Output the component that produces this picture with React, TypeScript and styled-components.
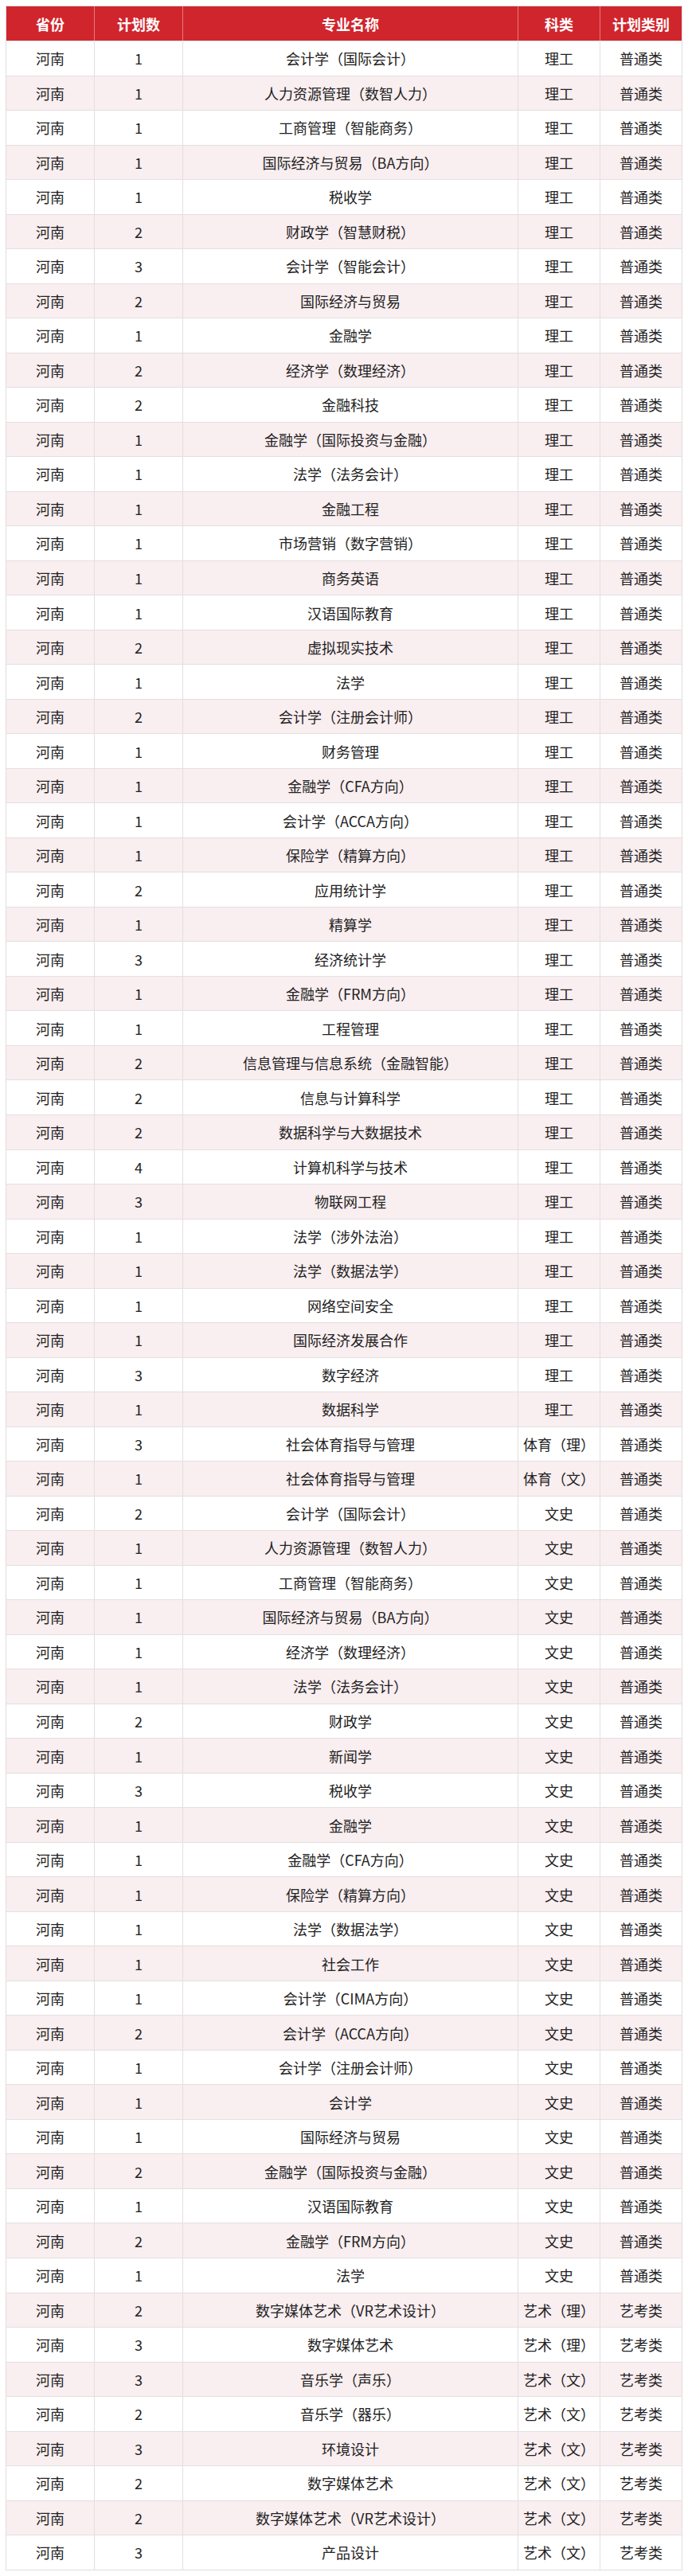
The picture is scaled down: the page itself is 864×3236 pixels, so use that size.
import styled, { createGlobalStyle } from 'styled-components'

const GlobalStyle = createGlobalStyle`
  html, body {
    margin: 0;
    padding: 0;
    background: #ffffff;
  }
  body {
    font-family: "Noto Sans CJK SC", "Noto Sans", sans-serif;
    color: #222222;
  }
`

const Page = styled.div`
  padding: 7px 7px 8px 7px;
`

const Table = styled.div`
  width: 850px;
  border: 1px solid #e2dcdd;
  box-sizing: border-box;
`

const COLUMNS = '111px 111px 421px 103px 102px'

const HeaderRow = styled.div`
  display: grid;
  grid-template-columns: ${COLUMNS};
  height: 43px;
  background: #d1252d;
`

const HeaderCell = styled.div`
  display: flex;
  align-items: center;
  justify-content: center;
  color: #ffffff;
  font-size: 18px;
  font-weight: 700;
  border-right: 1px solid #e27a7e;
  &:last-child {
    border-right: none;
  }
`

interface RowProps {
  striped: boolean
}

const Row = styled.div<RowProps>`
  display: grid;
  grid-template-columns: ${COLUMNS};
  height: 43.53px;
  box-sizing: border-box;
  border-top: 1.5px solid #e4dfe0;
  background: ${({ striped }) => (striped ? '#f9eef0' : '#ffffff')};
`

const Cell = styled.div`
  display: flex;
  align-items: center;
  justify-content: center;
  font-size: 18px;
  color: #222222;
  white-space: nowrap;
  border-right: 1px solid #e4dfe0;
  &:last-child {
    border-right: none;
  }
`

type Item = [number, string, string, string]

const LG = '理工'
const WS = '文史'
const PT = '普通类'
const YK = '艺考类'

const rows: Item[] = [
  [1, '会计学（国际会计）', LG, PT],
  [1, '人力资源管理（数智人力）', LG, PT],
  [1, '工商管理（智能商务）', LG, PT],
  [1, '国际经济与贸易（BA方向）', LG, PT],
  [1, '税收学', LG, PT],
  [2, '财政学（智慧财税）', LG, PT],
  [3, '会计学（智能会计）', LG, PT],
  [2, '国际经济与贸易', LG, PT],
  [1, '金融学', LG, PT],
  [2, '经济学（数理经济）', LG, PT],
  [2, '金融科技', LG, PT],
  [1, '金融学（国际投资与金融）', LG, PT],
  [1, '法学（法务会计）', LG, PT],
  [1, '金融工程', LG, PT],
  [1, '市场营销（数字营销）', LG, PT],
  [1, '商务英语', LG, PT],
  [1, '汉语国际教育', LG, PT],
  [2, '虚拟现实技术', LG, PT],
  [1, '法学', LG, PT],
  [2, '会计学（注册会计师）', LG, PT],
  [1, '财务管理', LG, PT],
  [1, '金融学（CFA方向）', LG, PT],
  [1, '会计学（ACCA方向）', LG, PT],
  [1, '保险学（精算方向）', LG, PT],
  [2, '应用统计学', LG, PT],
  [1, '精算学', LG, PT],
  [3, '经济统计学', LG, PT],
  [1, '金融学（FRM方向）', LG, PT],
  [1, '工程管理', LG, PT],
  [2, '信息管理与信息系统（金融智能）', LG, PT],
  [2, '信息与计算科学', LG, PT],
  [2, '数据科学与大数据技术', LG, PT],
  [4, '计算机科学与技术', LG, PT],
  [3, '物联网工程', LG, PT],
  [1, '法学（涉外法治）', LG, PT],
  [1, '法学（数据法学）', LG, PT],
  [1, '网络空间安全', LG, PT],
  [1, '国际经济发展合作', LG, PT],
  [3, '数字经济', LG, PT],
  [1, '数据科学', LG, PT],
  [3, '社会体育指导与管理', '体育（理）', PT],
  [1, '社会体育指导与管理', '体育（文）', PT],
  [2, '会计学（国际会计）', WS, PT],
  [1, '人力资源管理（数智人力）', WS, PT],
  [1, '工商管理（智能商务）', WS, PT],
  [1, '国际经济与贸易（BA方向）', WS, PT],
  [1, '经济学（数理经济）', WS, PT],
  [1, '法学（法务会计）', WS, PT],
  [2, '财政学', WS, PT],
  [1, '新闻学', WS, PT],
  [3, '税收学', WS, PT],
  [1, '金融学', WS, PT],
  [1, '金融学（CFA方向）', WS, PT],
  [1, '保险学（精算方向）', WS, PT],
  [1, '法学（数据法学）', WS, PT],
  [1, '社会工作', WS, PT],
  [1, '会计学（CIMA方向）', WS, PT],
  [2, '会计学（ACCA方向）', WS, PT],
  [1, '会计学（注册会计师）', WS, PT],
  [1, '会计学', WS, PT],
  [1, '国际经济与贸易', WS, PT],
  [2, '金融学（国际投资与金融）', WS, PT],
  [1, '汉语国际教育', WS, PT],
  [2, '金融学（FRM方向）', WS, PT],
  [1, '法学', WS, PT],
  [2, '数字媒体艺术（VR艺术设计）', '艺术（理）', YK],
  [3, '数字媒体艺术', '艺术（理）', YK],
  [3, '音乐学（声乐）', '艺术（文）', YK],
  [2, '音乐学（器乐）', '艺术（文）', YK],
  [3, '环境设计', '艺术（文）', YK],
  [2, '数字媒体艺术', '艺术（文）', YK],
  [2, '数字媒体艺术（VR艺术设计）', '艺术（文）', YK],
  [3, '产品设计', '艺术（文）', YK],
]

const headers = ['省份', '计划数', '专业名称', '科类', '计划类别']

export default function App() {
  return (
    <Page>
      <GlobalStyle />
      <Table>
        <HeaderRow>
          {headers.map((h) => (
            <HeaderCell key={h}>{h}</HeaderCell>
          ))}
        </HeaderRow>
        {rows.map(([count, major, subject, kind], i) => (
          <Row key={i} striped={i % 2 === 1}>
            <Cell>河南</Cell>
            <Cell>{count}</Cell>
            <Cell>{major}</Cell>
            <Cell>{subject}</Cell>
            <Cell>{kind}</Cell>
          </Row>
        ))}
      </Table>
    </Page>
  )
}
